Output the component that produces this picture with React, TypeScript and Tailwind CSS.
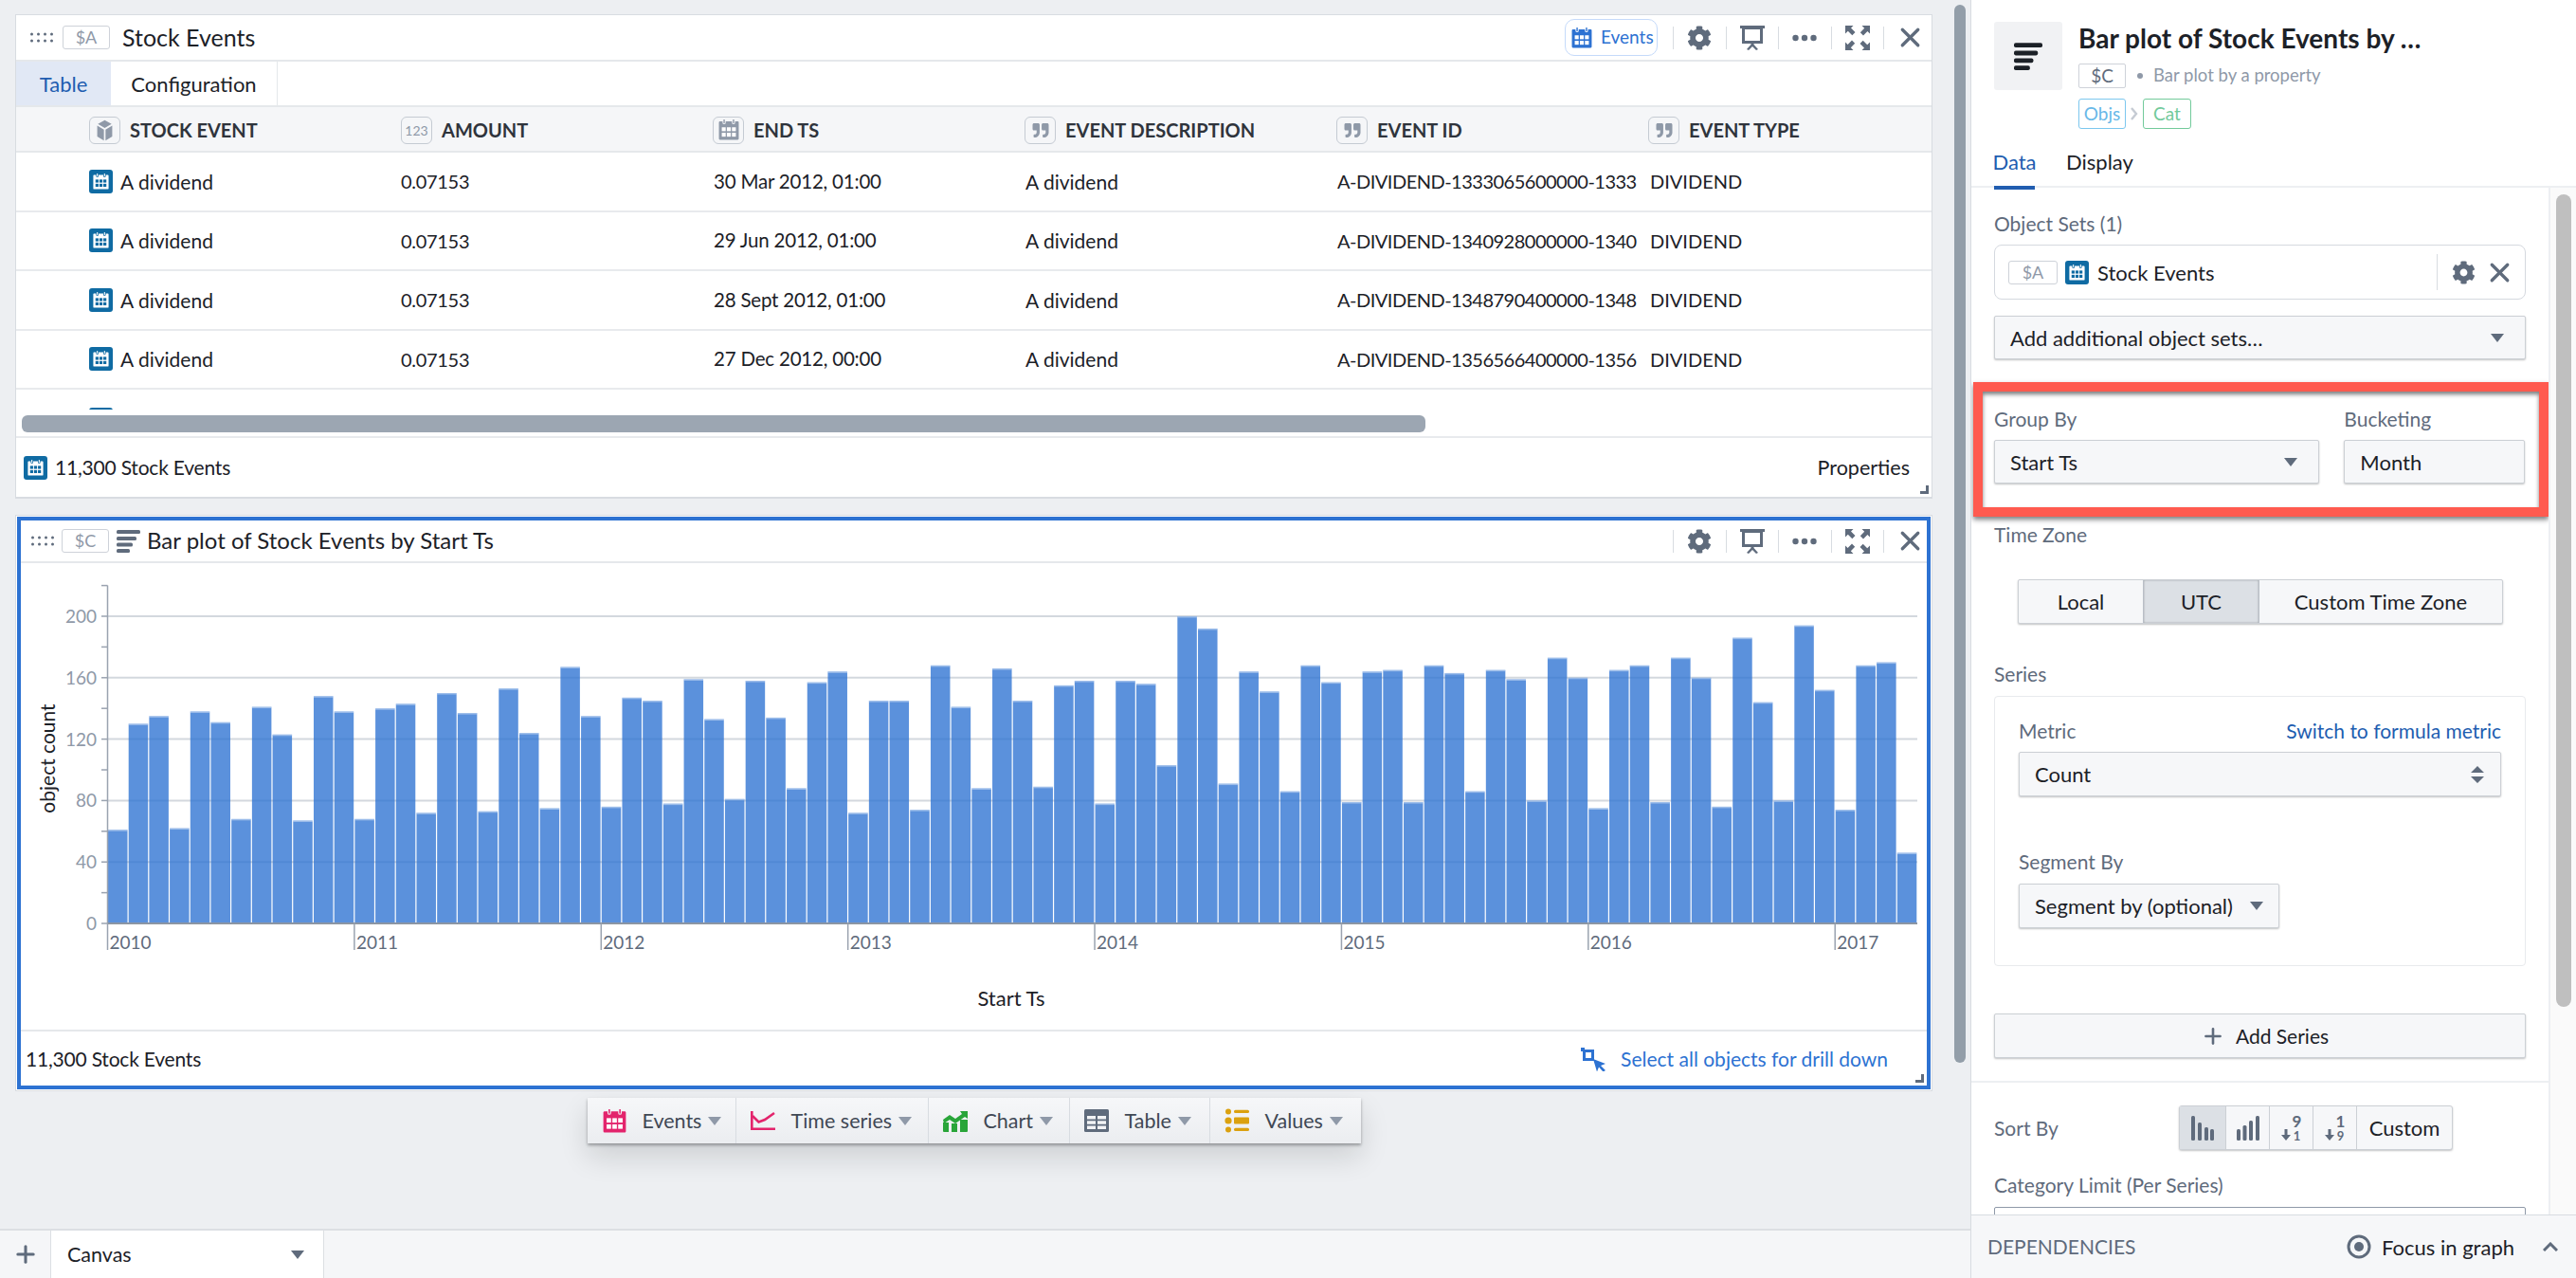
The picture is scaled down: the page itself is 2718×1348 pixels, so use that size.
import { FaCog, FaQuoteRight } from "react-icons/fa";
import { Plus, X } from "lucide-react";
import type { ReactNode } from "react";

const BARS = [
  61, 130, 135, 62, 138, 131, 68, 141, 123, 67, 148, 138,
  68, 140, 143, 72, 150, 137, 73, 153, 124, 75, 167, 135,
  76, 147, 145, 78, 159, 133, 81, 158, 134, 88, 157, 164,
  72, 145, 145, 74, 168, 141, 88, 166, 145, 89, 155, 158,
  78, 158, 156, 103, 200, 192, 91, 164, 151, 86, 168, 157,
  79, 164, 165, 79, 168, 163, 86, 165, 159, 80, 173, 160,
  75, 165, 168, 79, 173, 160, 76, 186, 144, 80, 194, 152,
  74, 168, 170, 46,
];

const ROWS = [
  { end: "30 Mar 2012, 01:00", id: "A-DIVIDEND-1333065600000-1333" },
  { end: "29 Jun 2012, 01:00", id: "A-DIVIDEND-1340928000000-1340" },
  { end: "28 Sept 2012, 01:00", id: "A-DIVIDEND-1348790400000-1348" },
  { end: "27 Dec 2012, 00:00", id: "A-DIVIDEND-1356566400000-1356" },
];

function Calendar({ className, cut = "#fff" }: { className?: string; cut?: string }) {
  return (
    <svg viewBox="0 0 16 16" className={className} fill="currentColor">
      <path d="M1.2 1.5h2v1a1.2 1.2 0 0 0 2.4 0v-1h4.8v1a1.2 1.2 0 0 0 2.4 0v-1h2c.5 0 .8.4.8.8v12.5c0 .5-.4.8-.8.8H1.2a.8.8 0 0 1-.8-.8V2.3c0-.4.4-.8.8-.8z" />
      <path d="M4.400.3v2.200M11.600.3v2.200" stroke="currentColor" strokeWidth="1" strokeLinecap="round" />
      <g fill={cut}>
        <rect x="2.600" y="6" width="3" height="3" />
        <rect x="6.500" y="6" width="3" height="3" />
        <rect x="10.400" y="6" width="3" height="3" />
        <rect x="2.600" y="10.200" width="3" height="3" />
        <rect x="6.500" y="10.200" width="3" height="3" />
        <rect x="10.400" y="10.200" width="3" height="3" />
      </g>
    </svg>
  );
}

function EventBadge() {
  return (
    <span className="flex h-[25px] w-[25px] shrink-0 items-center justify-center rounded-[3px] bg-[#0f6ba3] text-white">
      <Calendar className="h-[17px] w-[17px]" cut="#0f6ba3" />
    </span>
  );
}

function Caret({ className }: { className?: string }) {
  return (
    <svg viewBox="0 0 14 9" className={className} fill="currentColor">
      <path d="M0 0h14L7 9z" />
    </svg>
  );
}

function Grip() {
  return (
    <svg viewBox="0 0 24 11" className="h-[11px] w-[24px] text-[#5f6b7c]" fill="currentColor">
      {[1.5, 8.5, 15.5, 22.5].map((x) => (
        <g key={x}>
          <circle cx={x} cy="2" r="1.5" />
          <circle cx={x} cy="9" r="1.5" />
        </g>
      ))}
    </svg>
  );
}

function Tag({ children, className = "" }: { children: ReactNode; className?: string }) {
  return (
    <span className={`flex items-center justify-center rounded-[3px] border border-[#ced2d9] text-[18px] text-[#8f99a8] ${className}`}>
      {children}
    </span>
  );
}

function BarPlotIcon({ className }: { className?: string }) {
  return (
    <svg viewBox="0 0 25 25" className={className} fill="currentColor">
      <rect x="0" y="1" width="25" height="4" rx="1.5" />
      <rect x="0" y="8" width="21" height="4" rx="1.5" />
      <rect x="0" y="14.5" width="17" height="4" rx="1.5" />
      <rect x="0" y="21" width="14" height="4" rx="1.5" />
    </svg>
  );
}

function CardTools({ lastWidth }: { lastWidth: string }) {
  const cell = "flex h-[24px] w-[55.5px] items-center justify-center border-l border-[#d8dce1] text-[#5f6b7c]";
  return (
    <div className="flex items-center">
      <div className={cell}>
        <FaCog className="h-[26px] w-[26px]" />
      </div>
      <div className={cell}>
        <svg viewBox="0 0 26 26" className="h-[26px] w-[26px]" fill="currentColor">
          <rect x="0" y="0" width="26" height="3" />
          <path d="M2 2h22v17H2zM5 4v12h16V4z" fillRule="evenodd" />
          <path d="M11.500 18h3v2l4.500 5-2 1-4-4-4 4-2-1 4.500-5z" />
        </svg>
      </div>
      <div className={cell}>
        <svg viewBox="0 0 26 8" className="h-[8px] w-[26px]" fill="currentColor">
          <circle cx="3.5" cy="4" r="3.2" />
          <circle cx="13" cy="4" r="3.2" />
          <circle cx="22.5" cy="4" r="3.2" />
        </svg>
      </div>
      <div className={cell}>
        <svg viewBox="0 0 26 26" className="h-[26px] w-[26px]" fill="currentColor">
          <path d="M0 0h8.500L6 2.600 10.500 7 7.300 10.200 2.800 5.800 0 8.500z" />
          <path d="M26 0v8.500L23.400 6 19 10.500 15.800 7.300 20.200 2.800 17.500 0z" />
          <path d="M0 26v-8.500L2.600 20 7 15.500l3.200 3.200-4.400 4.500L8.500 26z" />
          <path d="M26 26h-8.500L20 23.400 15.500 19l3.200-3.200 4.500 4.400L26 17.500z" />
        </svg>
      </div>
      <div className={`flex h-[24px] items-center justify-start border-l border-[#d8dce1] pl-[11px] text-[#5f6b7c] ${lastWidth}`}>
        <X className="h-[33px] w-[33px] shrink-0" strokeWidth={2.4} />
      </div>
    </div>
  );
}

function FieldHead({ icon, label }: { icon: ReactNode; label: string }) {
  return (
    <div className="flex w-[329px] shrink-0 items-center gap-[10px]">
      <span className="flex h-[29px] w-[33px] items-center justify-center rounded-[6px] border border-[#c5cbd3] text-[#8f99a8]">
        {icon}
      </span>
      <span className="text-[20px] font-bold text-[#2f343c]">{label}</span>
    </div>
  );
}

function Chart() {
  const left = 113.5;
  const base = 974;
  const step = 1909.5 / 88;
  const unit = 1.62;
  return (
    <svg viewBox="22 594 2011 492" className="h-[492px] w-[2011px]" fontFamily="Lato, sans-serif">
      {[40, 80, 120, 160, 200].map((v) => (
        <line key={v} x1={left} x2={2023} y1={base - v * unit} y2={base - v * unit} stroke="#d3d8de" strokeWidth="2" />
      ))}
      {BARS.map((v, i) => (
        <g key={i}>
          <rect x={left + i * step + 0.5} y={base - v * unit} width={step - 1.2} height={v * unit} fill="#2d72d2" opacity="0.78" />
          <rect x={left + i * step + 0.5} y={base - v * unit} width={step - 1.2} height="1.5" fill="#fff" opacity="0.4" />
        </g>
      ))}
      <line x1={left} x2={left} y1="617.5" y2={base} stroke="#9aa3b0" strokeWidth="1.5" />
      <line x1={left} x2={2023} y1={base} y2={base} stroke="#8b95a3" strokeWidth="2" />
      {[0, 20, 40, 60, 80, 100, 120, 140, 160, 180, 200, 220].map((v) => (
        <line key={v} x1="107" x2={left} y1={base - v * unit} y2={base - v * unit} stroke="#9aa3b0" strokeWidth="1.5" />
      ))}
      {[0, 40, 80, 120, 160, 200].map((v) => (
        <text key={v} x="102" y={base - v * unit + 7} textAnchor="end" fontSize="19" fill="#8f99a8">
          {v}
        </text>
      ))}
      {[2010, 2011, 2012, 2013, 2014, 2015, 2016, 2017].map((year, i) => {
        const x = left + i * 12 * step;
        return (
          <g key={year}>
            <line x1={x} x2={x} y1={base} y2="1002" stroke="#9aa3b0" strokeWidth="1.5" />
            <text x={x + 2} y="1001" fontSize="19" fill="#5f6b7c">
              {year}
            </text>
          </g>
        );
      })}
      <text x="58" y="800" transform="rotate(-90 58 800)" textAnchor="middle" fontSize="21" fill="#1c2127">
        object count
      </text>
      <text x="1067" y="1061" textAnchor="middle" fontSize="22" fill="#1c2127">
        Start Ts
      </text>
    </svg>
  );
}

function ToolItem({ width, icon, label }: { width: string; icon: ReactNode; label: string }) {
  return (
    <div className={`flex items-center border-r border-[#d8dce1] pl-[15px] last:border-r-0 ${width}`}>
      <span className="flex w-[27px] justify-center">{icon}</span>
      <span className="ml-[16px] text-[21.5px] text-[#404854]">{label}</span>
      <Caret className="ml-[7px] h-[9px] w-[14px] text-[#8f99a8]" />
    </div>
  );
}

function Resize() {
  return (
    <svg viewBox="0 0 9 9" className="absolute right-[3px] bottom-[3px] h-[9px] w-[9px] text-[#5f6b7c]" fill="currentColor">
      <path d="M6 0h3v9H0V6h6z" />
    </svg>
  );
}

function SelectBox({ children, className = "" }: { children: ReactNode; className?: string }) {
  return (
    <div className={`flex items-center rounded-[2px] border border-[#ccd0d5] bg-[#f6f7f9] pl-[16px] text-[22px] text-[#1c2127] shadow-[0_1px_2px_rgba(17,20,24,0.25)] ${className}`}>
      {children}
    </div>
  );
}

function Label({ children, className = "" }: { children: ReactNode; className?: string }) {
  return <div className={`flex h-[28px] items-center text-[21px] text-[#5f6b7c] ${className}`}>{children}</div>;
}

function SideRail() {
  return <div className="absolute top-[5px] left-[2062px] h-[1116px] w-[12px] rounded-full bg-[#939ea9]" />;
}

function SortDigits({ top, bottom }: { top: string; bottom: string }) {
  return (
    <div className="flex w-[46px] items-center justify-center gap-[2px] border-l border-[#ccd0d5] font-bold">
      <svg viewBox="0 0 10 12" className="mt-[14px] h-[12px] w-[10px]" fill="currentColor">
        <path d="M3.500 0h3v6h3.500L5 12 0 6h3.500z" />
      </svg>
      <div className="flex flex-col items-center leading-none">
        <span className="text-[17px]">{top}</span>
        <span className="mt-px text-[13px]">{bottom}</span>
      </div>
    </div>
  );
}

export default function App() {
  return (
    <div className="flex h-[1348px] w-[2718px] overflow-hidden bg-[#edeff2] font-[Lato,sans-serif] text-[#1c2127]">
      <div className="relative flex w-[2079px] shrink-0 flex-col">
        <div className="flex-1 overflow-hidden pt-[15px] pl-[16px]">
          {/* table card */}
          <div className="relative h-[511px] w-[2023px] border border-b-2 border-[#d8dce1] bg-white">
            <div className="flex h-[49px] items-center justify-between border-b-2 border-[#e5e8eb] pl-[15px]">
              <div className="flex items-center">
                <Grip />
                <Tag className="ml-[10px] h-[25px] w-[50px]">$A</Tag>
                <span className="ml-[13px] text-[25px]">Stock Events</span>
              </div>
              <div className="flex items-center">
                <div className="mr-[16px] flex h-[39px] w-[98px] items-center gap-[9px] rounded-[10px] border border-[#c5dafa] pl-[6px] text-[#2d72d2]">
                  <Calendar className="h-[22px] w-[22px]" />
                  <span className="text-[19px]">Events</span>
                </div>
                <CardTools lastWidth="w-[51px]" />
              </div>
            </div>
            <div className="flex h-[48px] border-b-2 border-[#e5e8eb] text-[22px]">
              <div className="flex w-[100px] items-center justify-center bg-[#e1e8f5] text-[#215db0]">Table</div>
              <div className="flex w-[176px] items-center justify-center border-r border-[#e5e8eb]">Configuration</div>
            </div>
            <div className="flex h-[48px] items-center border-b-2 border-[#e5e8eb] bg-[#f5f6f8] pt-[2px] pl-[77px]">
              <FieldHead
                label="STOCK EVENT"
                icon={
                  <svg viewBox="0 0 16 16" className="h-[23px] w-[23px]" fill="currentColor">
                    <path d="M8 .5l5 2.800-5 2.900-5-2.900zM2.500 4.600l4.900 2.800v8.100l-4.900-3zM13.500 4.600v7.900l-4.900 3V7.400z" />
                  </svg>
                }
              />
              <FieldHead label="AMOUNT" icon={<span className="text-[14px]">123</span>} />
              <FieldHead label="END TS" icon={<Calendar className="h-[22px] w-[22px]" />} />
              <FieldHead label="EVENT DESCRIPTION" icon={<FaQuoteRight className="h-[17px] w-[20px]" />} />
              <FieldHead label="EVENT ID" icon={<FaQuoteRight className="h-[17px] w-[20px]" />} />
              <FieldHead label="EVENT TYPE" icon={<FaQuoteRight className="h-[17px] w-[20px]" />} />
            </div>
            <div className="h-[271px] overflow-hidden text-[21px]">
              {ROWS.map((row) => (
                <div key={row.id} className="flex h-[62.5px] items-center border-b-2 border-[#e8eaed] pl-[77px]">
                  <div className="flex w-[329px] items-center gap-[8px]">
                    <EventBadge />
                    <span>A dividend</span>
                  </div>
                  <div className="w-[330px] text-[20px] tracking-[-0.3px]">0.07153</div>
                  <div className="w-[329px] text-[20.5px] tracking-[-0.2px]">{row.end}</div>
                  <div className="w-[329px]">A dividend</div>
                  <div className="w-[330px] text-[20px] tracking-[-0.5px] whitespace-nowrap">{row.id}</div>
                  <div className="text-[20px]">DIVIDEND</div>
                </div>
              ))}
              <div className="pt-[19px] pl-[77px]">
                <EventBadge />
              </div>
            </div>
            <div className="h-[30px] border-b-2 border-[#e8eaed] pt-[6px] pl-[6px]">
              <div className="h-[18px] w-[1481px] rounded-[6px] bg-[#9ca6b2]" />
            </div>
            <div className="flex h-[62px] items-center justify-between pr-[23px] pl-[8px] text-[21px]">
              <div className="flex items-center gap-[8px]">
                <EventBadge />
                <span className="tracking-[-0.2px]">11,300 Stock Events</span>
              </div>
              <span className="text-[21.500px]">Properties</span>
            </div>
            <Resize />
          </div>

          {/* chart card */}
          <div className="mt-[17px] h-[608px] w-[2023px] border border-[#d8dce1] bg-white p-px">
            <div className="relative h-full border-4 border-[#2d72d2]">
              <div className="flex h-[45px] items-center justify-between border-b-2 border-[#e5e8eb] pl-[11px]">
                <div className="flex items-center">
                  <Grip />
                  <Tag className="ml-[8px] h-[25px] w-[50px]">$C</Tag>
                  <BarPlotIcon className="ml-[8px] h-[25px] w-[25px] text-[#5f6b7c]" />
                  <span className="mb-[2px] ml-[7px] text-[24px]">Bar plot of Stock Events by Start Ts</span>
                </div>
                <CardTools lastWidth="w-[46px]" />
              </div>
              <Chart />
              <div className="flex h-[59px] items-center justify-between border-t-2 border-[#e5e8eb] pr-[41px] pl-[5px] text-[21px]">
                <span className="tracking-[-0.2px]">11,300 Stock Events</span>
                <div className="flex items-center gap-[15px] text-[#2d72d2]">
                  <svg viewBox="0 0 28 26" className="h-[26px] w-[28px]" fill="currentColor">
                    <path d="M3 3h12v12H3zM6 6v6h6V6z" fillRule="evenodd" />
                    <rect x="1" y="1" width="4" height="4" />
                    <path d="M14 13l13 5-5 2 5 5-2.500 1.500-4.500-5-2 5z" />
                  </svg>
                  <span>Select all objects for drill down</span>
                </div>
              </div>
              <Resize />
            </div>
          </div>

          {/* add-widget toolbar */}
          <div className="mt-[7px] flex w-[2023px] justify-center">
            <div className="flex h-[48px] w-[816px] bg-gradient-to-b from-[#f6f7f9] to-[#ebedf0] shadow-[0_2px_3px_rgba(17,20,24,0.35),0_14px_30px_rgba(17,20,24,0.14)]">
              <ToolItem width="w-[157px]" label="Events" icon={<span className="text-[#e3246c]"><Calendar className="h-[25px] w-[25px]" /></span>} />
              <ToolItem
                width="w-[203px]"
                label="Time series"
                icon={
                  <svg viewBox="0 0 26 20" className="h-[20px] w-[26px] text-[#e3246c]" fill="none" stroke="currentColor" strokeWidth="2.6">
                    <path d="M1.300 0v18.700H26" />
                    <path d="M2 5l6.500 6.500L15 9 25 2" />
                  </svg>
                }
              />
              <ToolItem
                width="w-[149px]"
                label="Chart"
                icon={
                  <svg viewBox="0 0 26 24" className="h-[24px] w-[26px] text-[#29a539]" fill="currentColor">
                    <path d="M0 14h6v10H1a1 1 0 0 1-1-1zM9 15h6v9H9zM18 11h8v12a1 1 0 0 1-1 1h-7z" />
                    <path d="M0 11l7-5 6 4 7-5-2-3h8v8l-3-2-10 7-6-4-6 4z" />
                  </svg>
                }
              />
              <ToolItem
                width="w-[148px]"
                label="Table"
                icon={
                  <svg viewBox="0 0 26 24" className="h-[24px] w-[26px] text-[#5f6b7c]">
                    <rect width="26" height="24" rx="1.500" fill="currentColor" />
                    <path fill="#f2f3f5" d="M3 7h9v3.500H3zM14 7h9v3.500h-9zM3 12.300h9v3.500H3zM14 12.300h9v3.500h-9zM3 17.600h9V21H3zM14 17.600h9V21h-9z" />
                  </svg>
                }
              />
              <ToolItem
                width="w-[159px]"
                label="Values"
                icon={
                  <svg viewBox="0 0 26 26" className="h-[26px] w-[26px] text-[#dba10f]" fill="currentColor">
                    <circle cx="4" cy="3.500" r="3" />
                    <rect x="10" y="1.800" width="16" height="3.200" rx="1.500" />
                    <circle cx="4" cy="13" r="3.600" />
                    <rect x="10" y="9.500" width="16" height="7" rx="1" />
                    <circle cx="4" cy="22.500" r="3" />
                    <rect x="10" y="20.800" width="16" height="3.200" rx="1.500" />
                  </svg>
                }
              />
            </div>
          </div>
        </div>

        <div className="flex h-[52px] shrink-0 border-t-2 border-[#dcdfe3] bg-[#f5f6f8]">
          <div className="flex w-[53px] items-center justify-center text-[#5f6b7c]">
            <Plus className="h-[28px] w-[28px]" strokeWidth={2.6} />
          </div>
          <div className="flex w-[289px] items-center justify-between border-x border-[#dcdfe3] bg-white pr-[20px] pl-[17px] text-[21.500px]">
            <span>Canvas</span>
            <Caret className="h-[9px] w-[14px] text-[#5f6b7c]" />
          </div>
        </div>
        <SideRail />
      </div>

      {/* editor panel */}
      <div className="flex w-[639px] shrink-0 flex-col border-l border-[#d8dce1] bg-white">
        <div className="h-[198px] shrink-0 border-b-2 border-[#edeff2]">
          <div className="flex pt-[23px] pl-[24px]">
            <div className="flex h-[72px] w-[72px] items-center justify-center rounded-[3px] bg-[#f1f2f4] text-[#1c2127]">
              <BarPlotIcon className="h-[30px] w-[32px]" />
            </div>
            <div className="ml-[17px]">
              <div className="-mt-[3px] flex h-[40px] items-center text-[28px] font-bold whitespace-nowrap">Bar plot of Stock Events by …</div>
              <div className="mt-[6px] flex items-center">
                <span className="flex h-[26px] w-[50px] items-center justify-center rounded-[2px] border border-[#ced2d9] text-[19px] text-[#5f6b7c]">$C</span>
                <span className="ml-[12px] h-[6px] w-[6px] rounded-full bg-[#8f99a8]" />
                <span className="ml-[11px] text-[18.500px] text-[#8f99a8]">Bar plot by a property</span>
              </div>
              <div className="mt-[10px] flex items-center">
                <span className="flex h-[32px] w-[50px] items-center justify-center rounded-[3px] border border-[#7cc7ee] text-[19px] text-[#68b8e8]">Objs</span>
                <svg viewBox="0 0 8 14" className="mx-[5px] h-[14px] w-[8px] text-[#c5cbd3]" fill="none" stroke="currentColor" strokeWidth="2.4">
                  <path d="M1 1l5 6-5 6" />
                </svg>
                <span className="flex h-[32px] w-[51px] items-center justify-center rounded-[3px] border border-[#72ca9b] text-[19px] text-[#72ca9b]">Cat</span>
              </div>
            </div>
          </div>
          <div className="mt-[9px] flex h-[55px] pl-[24px] text-[22px]">
            <div className="flex w-[43px] items-center justify-center border-b-4 border-[#215db0] text-[#215db0]">Data</div>
            <div className="ml-[33px] flex items-center pb-[4px]">Display</div>
          </div>
        </div>

        <div className="relative flex min-h-0 flex-1">
          <div className="w-[611px] shrink-0 overflow-hidden border-r-2 border-[#edeff2] pt-[24px] pr-[24px] pl-[24px]">
            <Label>Object Sets (1)</Label>
            <div className="mt-[8px] flex h-[58px] items-center rounded-[8px] border border-[#d5d9df] pl-[14px]">
              <Tag className="h-[25px] w-[52px]">$A</Tag>
              <span className="ml-[8px]">
                <EventBadge />
              </span>
              <span className="ml-[9px] text-[22px]">Stock Events</span>
              <div className="ml-auto flex h-[38px] items-center gap-[9px] border-l border-[#d8dce1] pr-[10px] pl-[15px] text-[#5f6b7c]">
                <FaCog className="h-[25px] w-[25px]" />
                <X className="h-[33px] w-[33px]" strokeWidth={2.4} />
              </div>
            </div>
            <SelectBox className="mt-[17px] h-[46px] justify-between pr-[22px]">
              <span>Add additional object sets…</span>
              <Caret className="h-[9px] w-[14px] text-[#5f6b7c]" />
            </SelectBox>

            {/* highlighted group-by block */}
            <div className="mt-[24px] -mr-[24px] -ml-[22px] h-[142px] border-[10px] border-[#ff5a4f] pt-[15px] pr-[15px] pl-[12px] shadow-[0_3px_5px_rgba(17,20,24,0.55),inset_0_3px_4px_rgba(17,20,24,0.55)]">
              <div className="flex gap-[26px]">
                <div className="w-[344px]">
                  <Label>Group By</Label>
                  <SelectBox className="mt-[8px] h-[46px] justify-between pr-[22px]">
                    <span>Start Ts</span>
                    <Caret className="h-[9px] w-[14px] text-[#5f6b7c]" />
                  </SelectBox>
                </div>
                <div className="w-[191px]">
                  <Label>Bucketing</Label>
                  <SelectBox className="mt-[8px] h-[46px]">Month</SelectBox>
                </div>
              </div>
            </div>

            <Label className="mt-[5px]">Time Zone</Label>
            <div className="mt-[33px] ml-[25px] flex h-[47px] w-[512px] rounded-[2px] border border-[#ccd0d5] bg-[#f6f7f9] text-[22px] shadow-[0_1px_2px_rgba(17,20,24,0.25)]">
              <div className="flex w-[131px] items-center justify-center">Local</div>
              <div className="flex w-[123px] items-center justify-center border-x border-[#b9bfc7] bg-[#dce0e5] shadow-[inset_0_0_2px_rgba(17,20,24,0.35)]">UTC</div>
              <div className="flex flex-1 items-center justify-center">Custom Time Zone</div>
            </div>

            <Label className="mt-[39px]">Series</Label>
            <div className="mt-[9px] h-[285px] rounded-[4px] border border-[#e8eaed] px-[25px] pt-[22px]">
              <div className="flex h-[28px] items-center justify-between">
                <Label>Metric</Label>
                <span className="text-[21px] text-[#215db0]">Switch to formula metric</span>
              </div>
              <SelectBox className="mt-[8px] h-[47px] justify-between pr-[17px]">
                <span>Count</span>
                <svg viewBox="0 0 14 18" className="h-[18px] w-[14px] text-[#5f6b7c]" fill="currentColor">
                  <path d="M7 0l7 7H0zM7 18l-7-7h14z" />
                </svg>
              </SelectBox>
              <Label className="mt-[55px]">Segment By</Label>
              <SelectBox className="mt-[9px] h-[47px] w-[275px] gap-[18px]">
                <span>Segment by (optional)</span>
                <Caret className="h-[9px] w-[14px] text-[#5f6b7c]" />
              </SelectBox>
            </div>

            <SelectBox className="mt-[50px] h-[47px] justify-center gap-[11px] pl-0 pr-[6px]">
              <Plus className="h-[26px] w-[26px] text-[#5f6b7c]" strokeWidth={2.4} />
              <span className="text-[21px]">Add Series</span>
            </SelectBox>
            <div className="mt-[24px] -mr-[24px] -ml-[24px] border-t-2 border-[#edeff2]" />

            <div className="mt-[24px] flex items-center">
              <Label className="w-[195px]">Sort By</Label>
              <div className="flex h-[47px] w-[289px] rounded-[3px] border border-[#ccd0d5] bg-[#f6f7f9] text-[#5f6b7c] shadow-[0_1px_2px_rgba(17,20,24,0.25)]">
                <div className="flex w-[48px] items-center justify-center bg-[#dce0e5]">
                  <svg viewBox="0 0 24 26" className="h-[26px] w-[24px]" fill="currentColor">
                    <rect x="0" y="0" width="4" height="26" rx="1.500" />
                    <rect x="7" y="7" width="4" height="19" rx="1.500" />
                    <rect x="14" y="12" width="4" height="14" rx="1.500" />
                    <rect x="20" y="14" width="4" height="12" rx="1.500" />
                  </svg>
                </div>
                <div className="flex w-[46px] items-center justify-center border-l border-[#ccd0d5]">
                  <svg viewBox="0 0 24 26" className="h-[26px] w-[24px]" fill="currentColor">
                    <rect x="0" y="14" width="4" height="12" rx="1.500" />
                    <rect x="6.500" y="10" width="4" height="16" rx="1.500" />
                    <rect x="13" y="5" width="4" height="21" rx="1.500" />
                    <rect x="20" y="0" width="4" height="26" rx="1.500" />
                  </svg>
                </div>
                <SortDigits top="9" bottom="1" />
                <SortDigits top="1" bottom="9" />
                <div className="flex flex-1 items-center justify-center border-l border-[#ccd0d5] text-[22px] text-[#1c2127]">Custom</div>
              </div>
            </div>
            <Label className="mt-[23px]">Category Limit (Per Series)</Label>
            <div className="mt-[9px] h-[46px] rounded-[2px] border border-[#8f99a8]" />
          </div>
          <div className="flex-1 bg-[#fafafa] pt-[7px] pl-[6px]">
            <div className="h-[857px] w-[16px] rounded-full bg-[#bfbfbf]" />
          </div>
        </div>

        <div className="flex h-[67px] shrink-0 items-center border-t border-[#d8dce1] bg-[#f6f7f9] pr-[19px] pl-[17px]">
          <span className="text-[21px] text-[#5f6b7c]">DEPENDENCIES</span>
          <svg viewBox="0 0 26 26" className="ml-auto h-[26px] w-[26px] text-[#5f6b7c]" fill="none" stroke="currentColor" strokeWidth="3">
            <circle cx="13" cy="13" r="11" />
            <circle cx="13" cy="13" r="5" fill="currentColor" stroke="none" />
          </svg>
          <span className="ml-[11px] text-[22px]">Focus in graph</span>
          <svg viewBox="0 0 16 10" className="ml-[30px] h-[10px] w-[16px] text-[#5f6b7c]" fill="none" stroke="currentColor" strokeWidth="3">
            <path d="M1 9l7-7 7 7" />
          </svg>
        </div>
      </div>
    </div>
  );
}
